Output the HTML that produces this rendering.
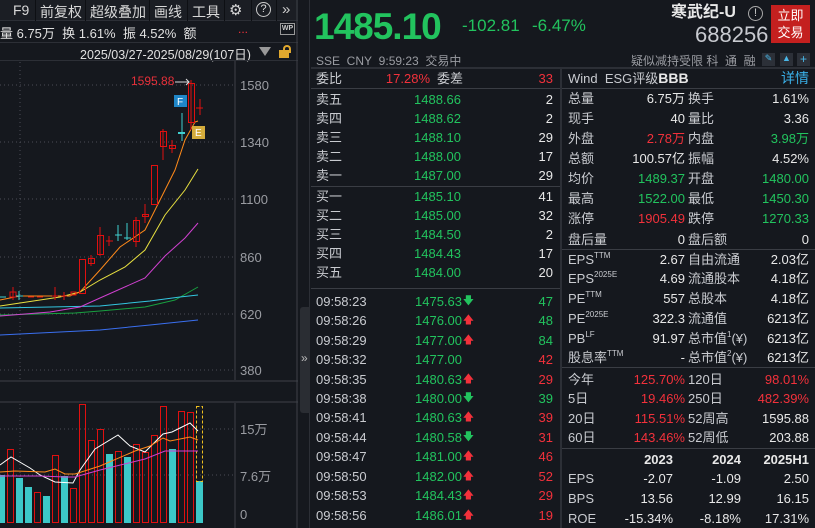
<!DOCTYPE html>
<html><head><meta charset="utf-8"><style>
*{margin:0;padding:0;box-sizing:border-box}
body{width:815px;height:528px;background:#15181e;color:#c9cbd0;font-family:"Liberation Sans","Noto Sans CJK SC",sans-serif;font-size:13px;position:relative;overflow:hidden}
.a{position:absolute;white-space:nowrap}
.g{color:#22c35e}.r{color:#f2313b}.w{color:#e8e8e8}
.row{position:absolute;height:19px;line-height:19px}
.row span{position:absolute;white-space:nowrap}
.hl{position:absolute;height:1px;background:#3a3d44}
.mid .l{left:5px}.mid .p{right:99px}.mid .v{right:7px}
.mid{left:311px;width:249px}
.rt{left:562px;width:253px}
.rt .a1{left:6px}.rt .b{right:130px}.rt .c{left:126px}.rt .d{right:6px}
.tk .p{right:98px}
.arr{position:absolute;right:86px;font-size:11px}
sup{font-size:8px;vertical-align:top;line-height:12px}
</style></head><body>
<!-- toolbar -->
<div class="a" style="left:0;top:0;width:298px;height:21px;background:#1b1e24;border-bottom:1px solid #2c2f36"></div>
<div class="a" style="top:2px;left:13px;font-size:14px;color:#d8d8d8">F9</div>
<div class="a" style="top:2px;left:40px;font-size:14px;color:#d8d8d8">前复权</div>
<div class="a" style="top:2px;left:90px;font-size:14px;color:#d8d8d8">超级叠加</div>
<div class="a" style="top:2px;left:154px;font-size:14px;color:#d8d8d8">画线</div>
<div class="a" style="top:2px;left:192px;font-size:14px;color:#d8d8d8">工具</div>
<div class="a" style="top:1px;left:229px;font-size:15px;color:#d8d8d8">⚙</div>
<div class="a" style="top:2px;left:256px;width:15px;height:15px;border:1.5px solid #ccc;border-radius:50%;font-size:11px;line-height:12px;text-align:center;color:#ddd">?</div>
<div class="a" style="top:1px;left:282px;font-size:15px;color:#ccc">»</div>
<div class="a" style="left:35px;top:0;width:1px;height:21px;background:#0d0f13"></div>
<div class="a" style="left:85px;top:0;width:1px;height:21px;background:#0d0f13"></div>
<div class="a" style="left:149px;top:0;width:1px;height:21px;background:#0d0f13"></div>
<div class="a" style="left:187px;top:0;width:1px;height:21px;background:#0d0f13"></div>
<div class="a" style="left:224px;top:0;width:1px;height:21px;background:#0d0f13"></div>
<div class="a" style="left:251px;top:0;width:1px;height:21px;background:#0d0f13"></div>
<div class="a" style="left:276px;top:0;width:1px;height:21px;background:#0d0f13"></div>
<div class="a" style="top:23px;left:0;font-size:13px;color:#e0e0e0">量 6.75万 &nbsp;换 1.61% &nbsp;振 4.52% &nbsp;额</div>
<div class="a r" style="top:22px;left:238px;font-size:12px">...</div>
<div class="a" style="top:23px;left:280px;width:15px;height:12px;border:1px solid #999;font-size:7px;color:#ccc;text-align:center;line-height:10px;font-weight:bold">WP</div>
<div class="hl" style="left:0;top:42px;width:298px;background:#2c2f36"></div>
<div class="a" style="top:44px;left:80px;font-size:12.5px;color:#e0e0e0;text-decoration:underline">2025/03/27-2025/08/29(107日)</div>
<div class="a" style="top:47px;left:259px;width:0;height:0;border-left:6px solid transparent;border-right:6px solid transparent;border-top:9px solid #999"></div>
<div class="a" style="top:50px;left:279px;width:10px;height:8px;background:#e0a82e"></div>
<div class="a" style="top:45px;left:283px;width:8px;height:8px;border:2px solid #e0a82e;border-bottom:none;border-radius:4px 4px 0 0"></div>
<div class="hl" style="left:0;top:60px;width:298px;background:#2c2f36"></div>

<svg class="a" style="left:0;top:0" width="298" height="528">
<g stroke="#4a4d55" stroke-dasharray="1,3" stroke-width="1">
<line x1="0" y1="85" x2="234" y2="85"/><line x1="0" y1="142" x2="234" y2="142"/><line x1="0" y1="199" x2="234" y2="199"/><line x1="0" y1="257" x2="234" y2="257"/><line x1="0" y1="314" x2="234" y2="314"/><line x1="0" y1="370" x2="234" y2="370"/>
<line x1="20" y1="62" x2="20" y2="380"/><line x1="20" y1="404" x2="20" y2="522"/>
<line x1="0" y1="429" x2="234" y2="429"/><line x1="0" y1="475" x2="234" y2="475"/>
</g>
<line x1="235" y1="61" x2="235" y2="380" stroke="#3e4148"/>
<line x1="235" y1="403" x2="235" y2="528" stroke="#3e4148"/>
<line x1="0" y1="381" x2="298" y2="381" stroke="#3e4148"/>
<line x1="0" y1="402" x2="298" y2="402" stroke="#3e4148"/>
<line x1="297" y1="0" x2="297" y2="528" stroke="#3e4148"/>
<g fill="#9a9ca2" font-size="13" font-family="Liberation Sans,Noto Sans CJK SC,sans-serif">
<text x="240" y="90">1580</text><text x="240" y="147">1340</text><text x="240" y="204">1100</text><text x="240" y="262">860</text><text x="240" y="319">620</text><text x="240" y="375">380</text>
<text x="240" y="434">15万</text><text x="240" y="481">7.6万</text><text x="240" y="519">0</text>
</g>
<g fill="none" stroke-width="1">
<polyline stroke="#3a6ff0" points="0,335 40,333 100,330 150,325 198,320"/>
<polyline stroke="#18a040" points="0,315 75,313 100,311 145,307 175,300 198,287"/>
<polyline stroke="#33c6e0" points="0,308 100,306 150,301 180,297 198,295"/>
<polyline stroke="#d040d0" points="0,316 50,312 80,307 100,298 145,278 165,256 185,238 198,223"/>
<polyline stroke="#e8e040" points="0,306 60,297 80,292 100,280 125,267 145,250 165,215 185,190 198,169"/>
<polyline stroke="#ff8a1a" points="0,300 20,296 70,296 80,292 100,270 120,247 145,230 160,200 175,170 185,140 195,122 198,121"/>
</g>
<g stroke="#e01010" fill="none">
<rect x="10" y="292" width="6" height="5"/><line x1="13" y1="287" x2="13" y2="300"/>
<line x1="28" y1="297" x2="34" y2="297"/><line x1="37" y1="297" x2="43" y2="297"/>
<line x1="52" y1="296" x2="58" y2="296"/><line x1="55" y1="287" x2="55" y2="300"/>
<line x1="61" y1="296" x2="67" y2="296"/><line x1="64" y1="292" x2="64" y2="300"/>
<rect x="71" y="292" width="5" height="3"/>
<rect x="79.5" y="259.5" width="6" height="34"/>
<rect x="88.5" y="258.5" width="6" height="5"/><line x1="91" y1="255" x2="91" y2="266"/>
<rect x="97.5" y="235.5" width="6" height="19"/><line x1="100" y1="227" x2="100" y2="256"/>
<line x1="106" y1="241" x2="113" y2="241"/><line x1="109" y1="236" x2="109" y2="246"/>
<rect x="133.5" y="220.5" width="6" height="21"/><line x1="136" y1="217" x2="136" y2="247"/>
<rect x="142.5" y="214.5" width="6" height="2"/><line x1="145" y1="204" x2="145" y2="223"/>
<rect x="151.5" y="165.5" width="6" height="39"/>
<rect x="160.5" y="131.5" width="6" height="15"/><line x1="163" y1="129" x2="163" y2="160"/>
<rect x="169.5" y="145.5" width="6" height="3"/><line x1="172" y1="140" x2="172" y2="153"/>
<rect x="188.5" y="83.5" width="6" height="39"/><line x1="191" y1="80" x2="191" y2="130"/>
<line x1="196" y1="108" x2="203" y2="108"/><line x1="200" y1="99" x2="200" y2="115"/>
</g>
<g stroke="#40d0d0">
<line x1="0" y1="297" x2="6" y2="297"/><line x1="16" y1="296" x2="23" y2="296"/><line x1="19" y1="291" x2="19" y2="300"/>
<line x1="115" y1="235" x2="122" y2="235"/><line x1="118" y1="225" x2="118" y2="241"/>
<line x1="124" y1="238" x2="131" y2="238"/><line x1="127" y1="223" x2="127" y2="240"/>
<line x1="178" y1="133" x2="185" y2="133" stroke-width="2"/><line x1="182" y1="113" x2="182" y2="141"/>
</g>
<text x="131" y="85" fill="#e8303a" font-size="12" font-family="Liberation Sans,sans-serif">1595.88</text>
<line x1="175" y1="82" x2="189" y2="82" stroke="#ddd"/><polyline points="186,79 189,82 186,85" fill="none" stroke="#ddd"/>
<rect x="174" y="95" width="13" height="12" fill="#1f86c8"/><text x="177" y="105" fill="#fff" font-size="10">F</text>
<rect x="192" y="126" width="13" height="13" fill="#d4ac3c"/><text x="195" y="136" fill="#fff" font-size="10">E</text>
<g fill="#3cc8c8">
<rect x="0" y="475" width="5" height="48"/><rect x="16" y="478" width="7" height="45"/><rect x="25" y="487" width="7" height="36"/><rect x="43" y="496" width="7" height="27"/><rect x="61" y="476" width="7" height="47"/><rect x="106" y="454" width="7" height="69"/><rect x="124" y="457" width="7" height="66"/><rect x="169" y="449" width="7" height="74"/><rect x="196" y="481" width="7" height="42"/>
</g>
<g fill="none" stroke="#e01010">
<rect x="7.5" y="449.5" width="6" height="73"/><rect x="34.5" y="492.5" width="6" height="30"/><rect x="52.5" y="455.5" width="6" height="67"/><rect x="70.5" y="488.5" width="6" height="34"/><rect x="79.5" y="404.5" width="6" height="118"/><rect x="88.5" y="440.5" width="6" height="82"/><rect x="97.5" y="429.5" width="6" height="93"/><rect x="115.5" y="451.5" width="6" height="71"/><rect x="133.5" y="444.5" width="6" height="78"/><rect x="142.5" y="452.5" width="6" height="70"/><rect x="151.5" y="435.5" width="6" height="87"/><rect x="160.5" y="406.5" width="6" height="116"/><rect x="178.5" y="411.5" width="6" height="111"/><rect x="187.5" y="412.5" width="6" height="110"/>
</g>
<rect x="196.5" y="406.5" width="6" height="75" fill="none" stroke="#f0c020" stroke-dasharray="3,2"/>
<g fill="none" stroke-width="1">
<polyline stroke="#fff" points="0,465 11,457 30,468 40,475 55,482 73,483 80,470 95,449 118,435 130,446 145,452 163,434 172,432 190,423 198,431"/>
<polyline stroke="#ff8a1a" points="0,472 15,471 45,472 55,469 65,474 75,474 100,466 135,451 150,446 163,438 170,441 190,437 198,440"/>
<polyline stroke="#d040d0" points="0,476 40,476 65,477 75,477 100,470 145,459 165,451 190,451 198,451"/>
</g>
</svg>
<div class="a" style="left:298px;top:0;width:12px;height:528px;background:#15181e;border-right:1px solid #2c2f36"></div>
<div class="a" style="left:300px;top:307px;width:10px;height:106px;background:#2a2d33;border-radius:3px 0 0 3px"></div>
<div class="a" style="left:301px;top:351px;font-size:12px;color:#bbb">»</div>

<!-- header -->
<div class="a g" style="left:314px;top:6px;font-size:37px;font-weight:bold;letter-spacing:-1px">1485.10</div>
<div class="a g" style="left:462px;top:16px;font-size:17px">-102.81</div>
<div class="a g" style="left:532px;top:16px;font-size:17px">-6.47%</div>
<div class="a w" style="left:671px;top:4px;font-size:16px;line-height:18px;font-weight:bold">寒武纪-U</div>
<div class="a" style="left:748px;top:6px;width:15px;height:15px;border:1.5px solid #aaa;border-radius:50%;font-size:11px;line-height:12px;text-align:center;color:#ccc">!</div>
<div class="a" style="left:771px;top:5px;width:39px;height:38px;background:#c4201f;color:#fff;font-size:13px;line-height:17px;text-align:center;padding-top:2px">立即<br>交易</div>
<div class="a" style="left:695px;top:23px;font-size:22px;line-height:24px;color:#c8cad0">688256</div>
<div class="a" style="left:316px;top:52px;font-size:12px;color:#9a9ca2">SSE&nbsp;&nbsp;CNY&nbsp;&nbsp;9:59:23&nbsp;&nbsp;交易中</div>
<div class="a" style="left:631px;top:52px;font-size:12px;color:#9a9ca2">疑似减持受限&nbsp;科&nbsp;&nbsp;通&nbsp;&nbsp;融</div>
<div class="a" style="left:762px;top:53px;width:13px;height:13px;background:#2c3038;color:#4ab8e8;font-size:9px;text-align:center">✎</div>
<div class="a" style="left:780px;top:53px;width:13px;height:13px;background:#2c3038;color:#4ab8e8;font-size:9px;text-align:center">▲</div>
<div class="a" style="left:797px;top:53px;width:13px;height:13px;background:#2c3038;color:#4ab8e8;font-size:12px;line-height:13px;text-align:center">+</div>
<div class="hl" style="left:311px;top:67px;width:504px;height:2px;background:#2c2f36"></div>
<div class="a" style="left:560px;top:69px;width:2px;height:459px;background:#2c2f36"></div>

<!-- middle -->
<div class="row mid" style="top:69px"><span class="l">委比</span><span class="r" style="right:130px">17.28%</span><span style="left:126px">委差</span><span class="v r">33</span></div>
<div class="hl" style="left:311px;top:88px;width:249px"></div>
<div class="row mid" style="top:90px"><span class="l">卖五</span><span class="p g">1488.66</span><span class="v w">2</span></div>
<div class="row mid" style="top:109px"><span class="l">卖四</span><span class="p g">1488.62</span><span class="v w">2</span></div>
<div class="row mid" style="top:128px"><span class="l">卖三</span><span class="p g">1488.10</span><span class="v w">29</span></div>
<div class="row mid" style="top:147px"><span class="l">卖二</span><span class="p g">1488.00</span><span class="v w">17</span></div>
<div class="row mid" style="top:166px"><span class="l">卖一</span><span class="p g">1487.00</span><span class="v w">29</span></div>
<div class="hl" style="left:311px;top:186px;width:249px"></div>
<div class="row mid" style="top:187px"><span class="l">买一</span><span class="p g">1485.10</span><span class="v w">41</span></div>
<div class="row mid" style="top:206px"><span class="l">买二</span><span class="p g">1485.00</span><span class="v w">32</span></div>
<div class="row mid" style="top:225px"><span class="l">买三</span><span class="p g">1484.50</span><span class="v w">2</span></div>
<div class="row mid" style="top:244px"><span class="l">买四</span><span class="p g">1484.43</span><span class="v w">17</span></div>
<div class="row mid" style="top:263px"><span class="l">买五</span><span class="p g">1484.00</span><span class="v w">20</span></div>
<div class="hl" style="left:311px;top:288px;width:249px"></div>
<div class="row mid tk" style="top:292px"><span class="l">09:58:23</span><span class="p g">1475.63</span><span class="arr g">🡇</span><span class="v g">47</span></div>
<div class="row mid tk" style="top:311px"><span class="l">09:58:26</span><span class="p g">1476.00</span><span class="arr r">🡅</span><span class="v g">48</span></div>
<div class="row mid tk" style="top:331px"><span class="l">09:58:29</span><span class="p g">1477.00</span><span class="arr r">🡅</span><span class="v g">84</span></div>
<div class="row mid tk" style="top:350px"><span class="l">09:58:32</span><span class="p g">1477.00</span><span class="v r">42</span></div>
<div class="row mid tk" style="top:370px"><span class="l">09:58:35</span><span class="p g">1480.63</span><span class="arr r">🡅</span><span class="v r">29</span></div>
<div class="row mid tk" style="top:389px"><span class="l">09:58:38</span><span class="p g">1480.00</span><span class="arr g">🡇</span><span class="v g">39</span></div>
<div class="row mid tk" style="top:408px"><span class="l">09:58:41</span><span class="p g">1480.63</span><span class="arr r">🡅</span><span class="v r">39</span></div>
<div class="row mid tk" style="top:428px"><span class="l">09:58:44</span><span class="p g">1480.58</span><span class="arr g">🡇</span><span class="v r">31</span></div>
<div class="row mid tk" style="top:447px"><span class="l">09:58:47</span><span class="p g">1481.00</span><span class="arr r">🡅</span><span class="v r">46</span></div>
<div class="row mid tk" style="top:467px"><span class="l">09:58:50</span><span class="p g">1482.00</span><span class="arr r">🡅</span><span class="v r">52</span></div>
<div class="row mid tk" style="top:486px"><span class="l">09:58:53</span><span class="p g">1484.43</span><span class="arr r">🡅</span><span class="v r">29</span></div>
<div class="row mid tk" style="top:506px"><span class="l">09:58:56</span><span class="p g">1486.01</span><span class="arr r">🡅</span><span class="v r">19</span></div>

<!-- right -->
<div class="row rt" style="top:69px"><span class="a1">Wind&nbsp; ESG评级<b class="w" style="font-size:14px">BBB</b></span><span class="d" style="color:#3ab0e8;font-size:14px">详情</span></div>
<div class="hl" style="left:562px;top:88px;width:253px"></div>
<div class="row rt" style="top:89px"><span class="a1">总量</span><span class="b w">6.75万</span><span class="c">换手</span><span class="d w">1.61%</span></div>
<div class="row rt" style="top:109px"><span class="a1">现手</span><span class="b w">40</span><span class="c">量比</span><span class="d w">3.36</span></div>
<div class="row rt" style="top:129px"><span class="a1">外盘</span><span class="b r">2.78万</span><span class="c">内盘</span><span class="d g">3.98万</span></div>
<div class="row rt" style="top:149px"><span class="a1">总额</span><span class="b w">100.57亿</span><span class="c">振幅</span><span class="d w">4.52%</span></div>
<div class="row rt" style="top:169px"><span class="a1">均价</span><span class="b g">1489.37</span><span class="c">开盘</span><span class="d g">1480.00</span></div>
<div class="row rt" style="top:189px"><span class="a1">最高</span><span class="b g">1522.00</span><span class="c">最低</span><span class="d g">1450.30</span></div>
<div class="row rt" style="top:209px"><span class="a1">涨停</span><span class="b r">1905.49</span><span class="c">跌停</span><span class="d g">1270.33</span></div>
<div class="row rt" style="top:230px"><span class="a1">盘后量</span><span class="b w">0</span><span class="c">盘后额</span><span class="d w">0</span></div>
<div class="hl" style="left:562px;top:249px;width:253px"></div>
<div class="row rt" style="top:250px"><span class="a1">EPS<sup>TTM</sup></span><span class="b w">2.67</span><span class="c">自由流通</span><span class="d w">2.03亿</span></div>
<div class="row rt" style="top:269px"><span class="a1">EPS<sup>2025E</sup></span><span class="b w">4.69</span><span class="c">流通股本</span><span class="d w">4.18亿</span></div>
<div class="row rt" style="top:289px"><span class="a1">PE<sup>TTM</sup></span><span class="b w">557</span><span class="c">总股本</span><span class="d w">4.18亿</span></div>
<div class="row rt" style="top:309px"><span class="a1">PE<sup>2025E</sup></span><span class="b w">322.3</span><span class="c">流通值</span><span class="d w">6213亿</span></div>
<div class="row rt" style="top:329px"><span class="a1">PB<sup>LF</sup></span><span class="b w">91.97</span><span class="c">总市值<sup>1</sup>(¥)</span><span class="d w">6213亿</span></div>
<div class="row rt" style="top:348px"><span class="a1">股息率<sup>TTM</sup></span><span class="b w">-</span><span class="c">总市值<sup>2</sup>(¥)</span><span class="d w">6213亿</span></div>
<div class="hl" style="left:562px;top:367px;width:253px"></div>
<div class="row rt" style="top:370px"><span class="a1">今年</span><span class="b r">125.70%</span><span class="c">120日</span><span class="d r">98.01%</span></div>
<div class="row rt" style="top:389px"><span class="a1">5日</span><span class="b r">19.46%</span><span class="c">250日</span><span class="d r">482.39%</span></div>
<div class="row rt" style="top:409px"><span class="a1">20日</span><span class="b r">115.51%</span><span class="c">52周高</span><span class="d w">1595.88</span></div>
<div class="row rt" style="top:428px"><span class="a1">60日</span><span class="b r">143.46%</span><span class="c">52周低</span><span class="d w">203.88</span></div>
<div class="hl" style="left:562px;top:448px;width:253px"></div>
<div class="row rt" style="top:450px;font-weight:bold"><span class="w" style="right:142px">2023</span><span class="w" style="right:74px">2024</span><span class="d w">2025H1</span></div>
<div class="row rt" style="top:469px"><span class="a1">EPS</span><span class="w" style="right:142px">-2.07</span><span class="w" style="right:74px">-1.09</span><span class="d w">2.50</span></div>
<div class="row rt" style="top:489px"><span class="a1">BPS</span><span class="w" style="right:142px">13.56</span><span class="w" style="right:74px">12.99</span><span class="d w">16.15</span></div>
<div class="row rt" style="top:509px"><span class="a1">ROE</span><span class="w" style="right:142px">-15.34%</span><span class="w" style="right:74px">-8.18%</span><span class="d w">17.31%</span></div>
</body></html>
